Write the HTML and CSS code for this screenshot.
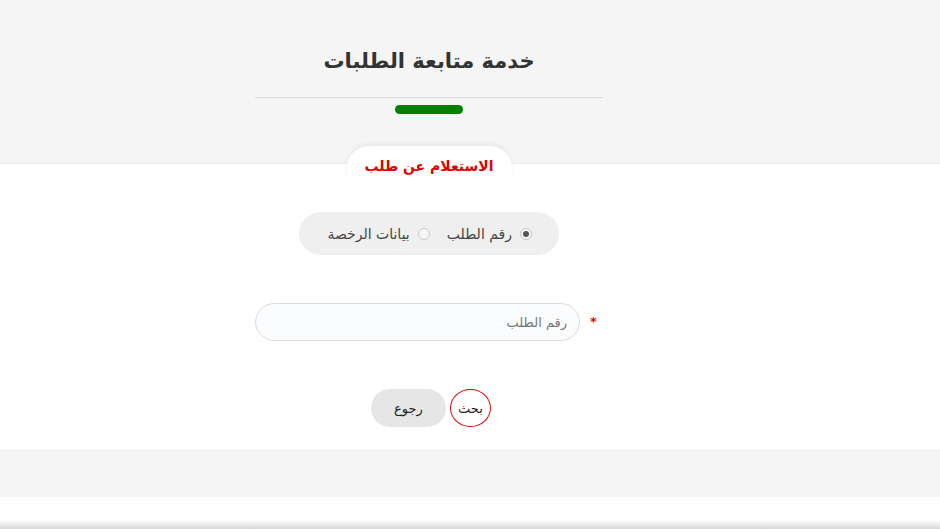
FILE: index.html
```html
<!DOCTYPE html>
<html lang="ar" dir="rtl">
<head>
<meta charset="utf-8">
<link rel="stylesheet" href="styles.css">
</head>
<body>
<header class="hero">
  <div class="wrap">
    <h1 class="hero-title">خدمة متابعة الطلبات</h1>
    <div class="hero-rule"></div>
    <div class="hero-bar"></div>
  </div>
</header>
<main class="panel">
  <div class="wrap">
    <div class="tab">الاستعلام عن طلب</div>
    <div class="choice">
      <label class="opt"><span class="radio checked"></span><span>رقم الطلب</span></label>
      <label class="opt"><span class="radio"></span><span>بيانات الرخصة</span></label>
    </div>
    <div class="field">
      <span class="req">*</span>
      <input class="input" type="text" placeholder="رقم الطلب">
    </div>
    <div class="actions">
      <button class="btn btn-search">بحث</button>
      <button class="btn btn-back">رجوع</button>
    </div>
  </div>
</main>
<footer class="foot"></footer>
<div class="gap"></div>
<div class="shade"></div>
</body>
</html>
```
FILE: styles.css
```css
* { box-sizing: border-box; }
html, body { margin: 0; padding: 0; }
body {
  width: 940px;
  height: 529px;
  overflow: hidden;
  background: #fff;
  font-family: "DejaVu Sans", "Noto Sans", sans-serif;
  color: #333;
}
.wrap {
  width: 858px;
  margin-left: 0;
  margin-right: auto;
  display: flex;
  flex-direction: column;
  align-items: center;
}
.hero {
  background: #f5f5f5;
  height: 163px;
  padding-top: 46px;
}
.hero-title {
  margin: 0;
  font-size: 21px;
  font-weight: bold;
  color: #333;
  line-height: 30px;
}
.hero-rule {
  width: 348px;
  height: 1px;
  background: #dcdcdc;
  margin-top: 21px;
}
.hero-bar {
  width: 68px;
  height: 9px;
  border-radius: 5px;
  background: #008000;
  margin-top: 7px;
}
.panel {
  border-top: 1px solid #ececec;
  height: 287px;
}
.tab {
  margin-top: -18px;
  width: 165px;
  height: 36px;
  background: #fff;
  border-radius: 22px 22px 0 0;
  box-shadow: 0 -3px 4px rgba(0,0,0,0.05);
  color: #e00000;
  font-weight: bold;
  font-size: 14px;
  text-align: center;
  line-height: 40px;
}
.choice {
  margin-top: 30px;
  width: 260px;
  height: 43px;
  background: #efefef;
  border-radius: 22px;
  display: flex;
  align-items: center;
  padding-right: 27px;
  gap: 17px;
  font-size: 14px;
  color: #444;
}
.opt { display: flex; align-items: center; gap: 8px; }
.radio {
  width: 12px; height: 12px;
  border-radius: 50%;
  border: 1px solid #c8c8c8;
  background: #f6f6f6;
  position: relative;
}
.radio.checked::after {
  content: "";
  position: absolute;
  top: 2px; left: 2px;
  width: 6px; height: 6px;
  border-radius: 50%;
  background: #555;
}
.field {
  margin-top: 48px;
  display: flex;
  align-items: center;
  gap: 10px;
  transform: translateX(-3px);
}
.req { color: #e00000; font-size: 13px; font-weight: bold; line-height: 10px; }
.input {
  width: 325px;
  height: 38px;
  border: 1px solid #dcdcdc;
  border-radius: 19px;
  background: #fafbfc;
  padding: 0 12px;
  font-family: inherit;
  font-size: 13px;
  direction: rtl;
}
.input::placeholder { color: #777; }
.actions {
  margin-top: 48px;
  display: flex;
  gap: 4px;
  transform: translateX(2px);
}
.btn {
  height: 38px;
  border-radius: 19px;
  font-family: inherit;
  font-size: 13px;
  color: #222;
  padding: 0;
}
.btn-search {
  width: 41px;
  background: #fff;
  border: 1px solid #e00000;
  border-radius: 50%;
}
.btn-back {
  width: 75px;
  background: #e6e6e6;
  border: none;
}
.foot {
  height: 47px;
  background: #f5f5f5;
  border-top: 1px solid #ececec;
}
.gap { height: 23px; }
.shade {
  height: 9px;
  background: linear-gradient(#fff, #d8d8d8);
}
```
